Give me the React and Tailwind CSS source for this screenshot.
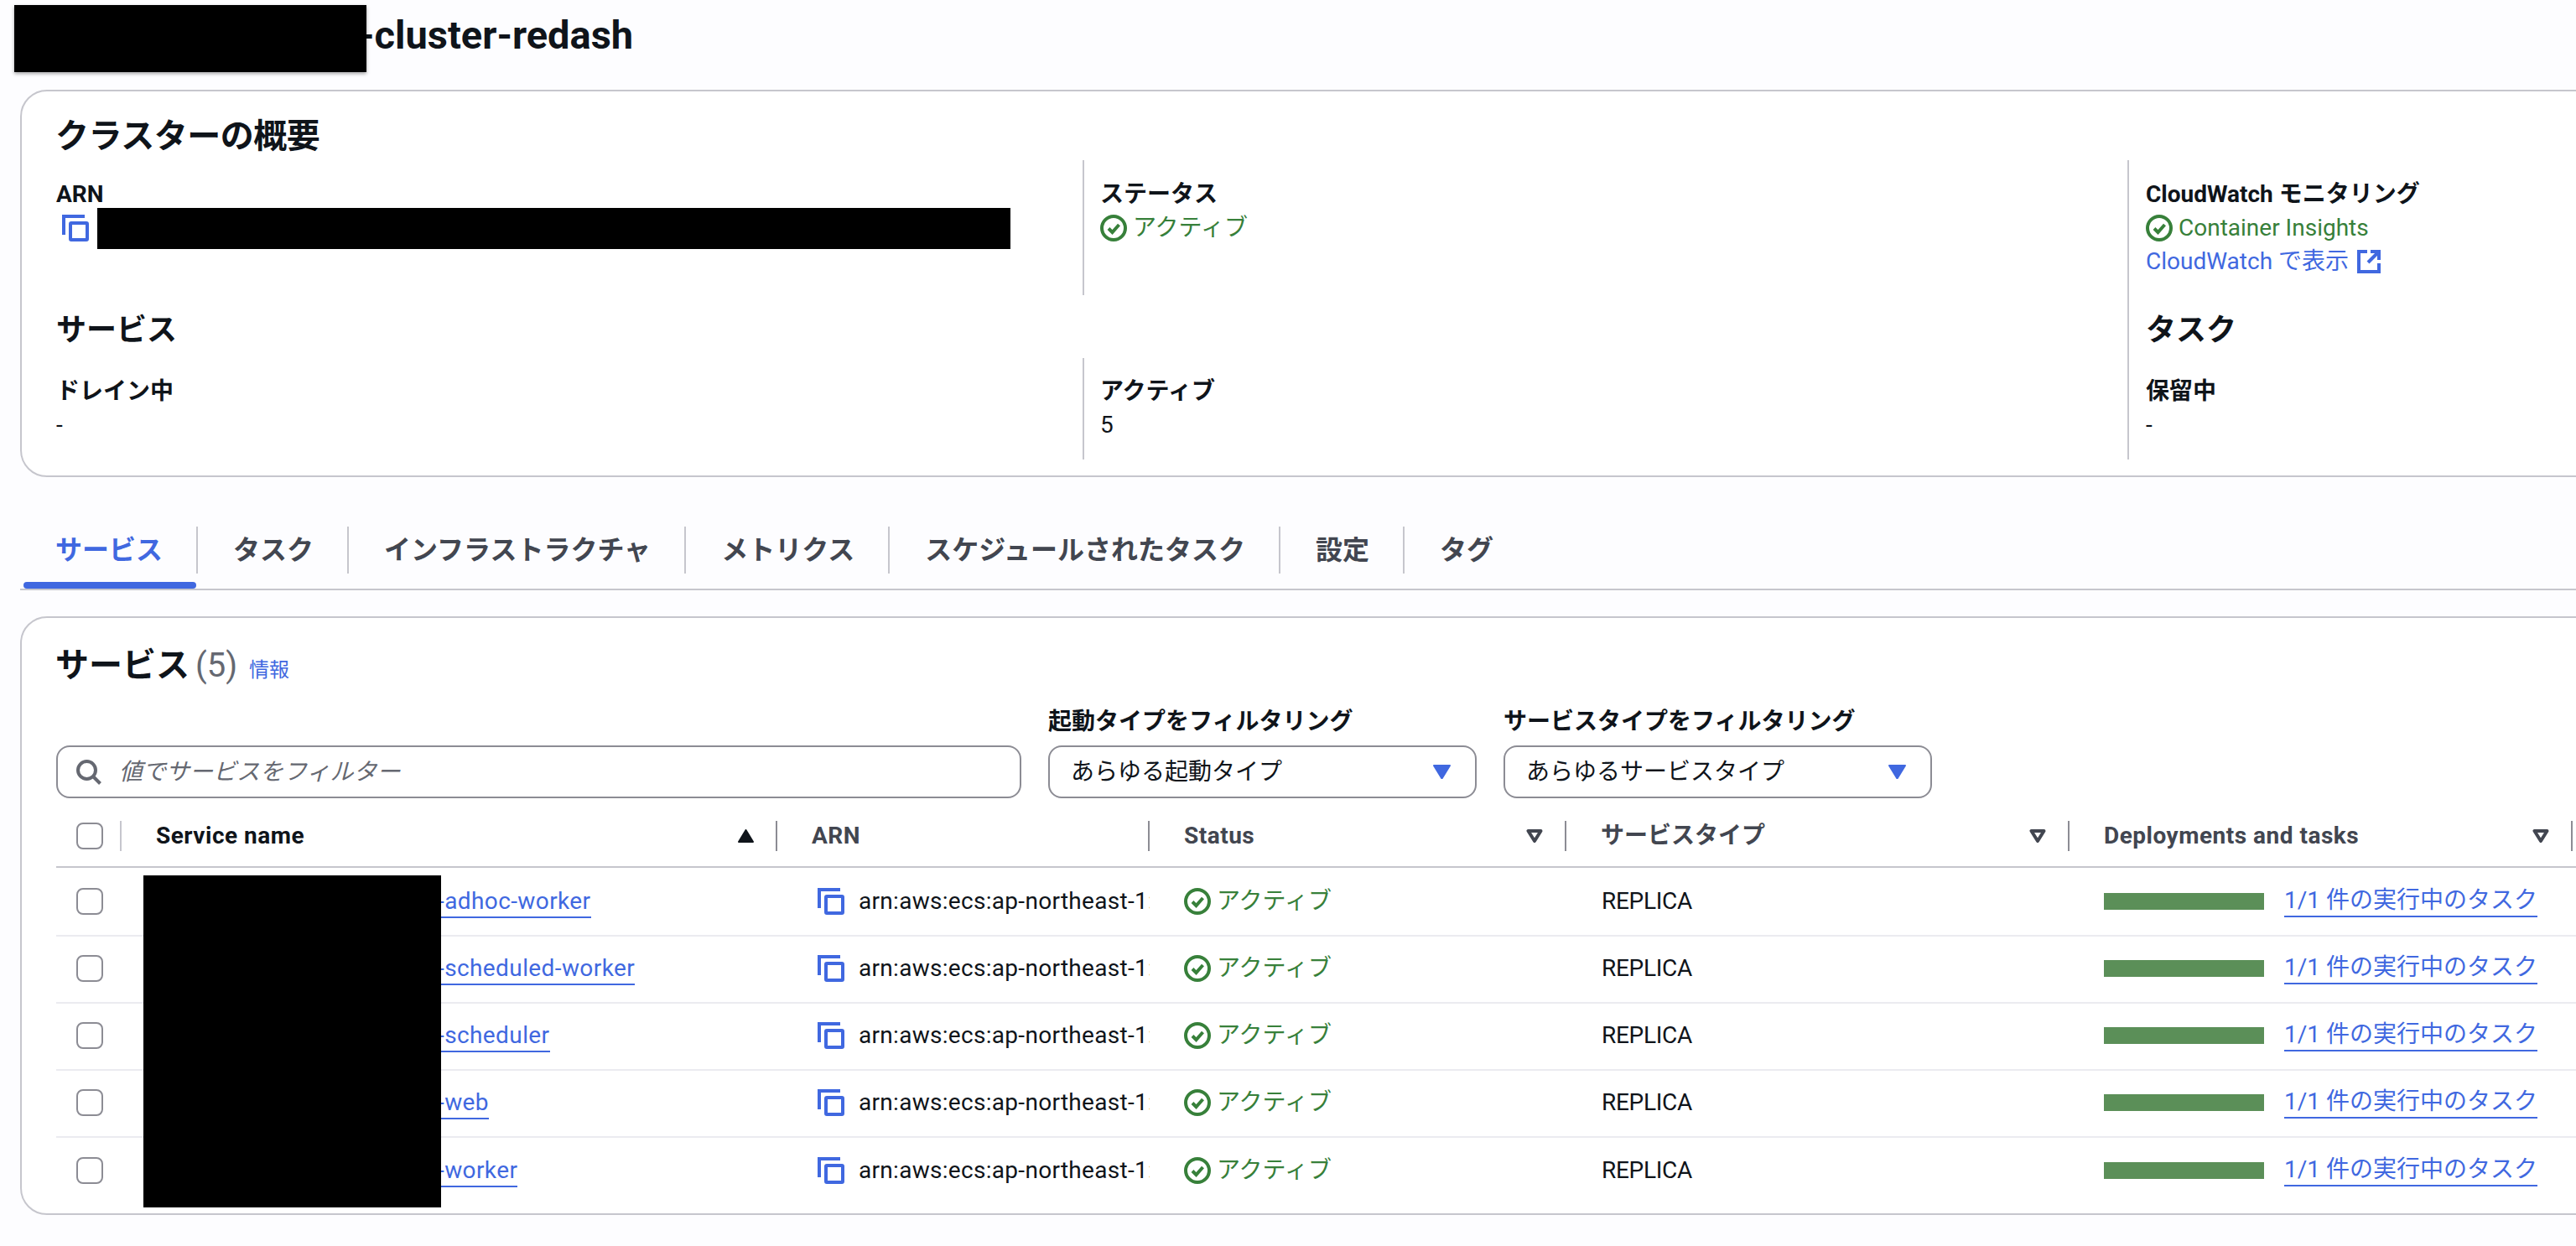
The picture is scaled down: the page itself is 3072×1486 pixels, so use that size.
const BLUE = "text-[#4068e0]";
const GREEN = "text-[#37803a]";

function CopyIcon({ className }) {
  return (
    <svg viewBox="0 0 32 32" className={className} fill="none" stroke="#4068e0" strokeWidth="4">
      <path d="M2 24V2h25" />
      <rect x="10" y="10" width="20" height="20" rx="1" />
    </svg>
  );
}

function CheckIcon() {
  return (
    <svg viewBox="0 0 32 32" className="w-8 h-8 shrink-0" fill="none" stroke="#37803a">
      <circle cx="16" cy="16" r="14" strokeWidth="4" />
      <path d="M10 16.500l4.500 4.500 8-9" strokeWidth="4" />
    </svg>
  );
}

function ExternalIcon() {
  return (
    <svg viewBox="0 0 28 28" className="w-7 h-7 shrink-0" fill="none" stroke="#4068e0" strokeWidth="4">
      <path d="M12 2H2v24h24V16" />
      <path d="M16 2h10v10" />
      <path d="M26 2L13 15" />
    </svg>
  );
}

function FilterIcon() {
  return (
    <svg viewBox="0 0 20 16" className="w-5 h-4 shrink-0" fill="none" stroke="#424650" strokeWidth="4" strokeLinejoin="round">
      <path d="M2.500 2h15L10 14z" />
    </svg>
  );
}

function Caret() {
  return (
    <svg viewBox="0 0 21 17" className="w-[21px] h-[17px] shrink-0">
      <path d="M1 1h19L10.500 16.500z" fill="#4068e0" stroke="#4068e0" strokeWidth="2" strokeLinejoin="round" />
    </svg>
  );
}

function Label({ children }) {
  return <div className="text-[28px] leading-[40px] font-bold text-[#0f141a]">{children}</div>;
}

function Status({ children }) {
  return (
    <div className={`flex items-center gap-[7px] text-[28px] leading-[40px] ${GREEN}`}>
      <CheckIcon />
      <span>{children}</span>
    </div>
  );
}

function Checkbox() {
  return <div className="w-8 h-8 rounded-lg border-2 border-[#8c8c94] bg-white" />;
}

function Head({ children, sort, filter, latin }) {
  return (
    <div className="h-9 flex items-center justify-between border-r-2 border-[#8c8c94] pl-[41px] pr-[26px] text-[28px] font-bold">
      <span className={`${sort ? "text-[#0f141a]" : "text-[#424650]"} ${latin ? "tracking-[0.5px]" : ""}`}>{children}</span>
      {sort && (
        <svg viewBox="0 0 19 16" className="w-[19px] h-4">
          <path d="M9.500 1L18 15H1z" fill="#0f141a" stroke="#0f141a" strokeWidth="2" strokeLinejoin="round" />
        </svg>
      )}
      {filter && <FilterIcon />}
    </div>
  );
}

const rows = ["-adhoc-worker", "-scheduled-worker", "-scheduler", "-web", "-worker"];
const gridCols = "grid grid-cols-[78px_782px_444px_497px_600px_600px_1fr]";
const tabs = ["サービス", "タスク", "インフラストラクチャ", "メトリクス", "スケジュールされたタスク", "設定", "タグ"];

export default function App() {
  return (
    <div
      className="w-[3072px] h-[1486px] overflow-hidden bg-[#fdfdff] text-[#0f141a] text-[28px]"
      style={{ fontFamily: 'Roboto, "Noto Sans CJK JP", sans-serif' }}
    >
      <div className="relative h-[107px] pl-[428px] pt-[7px]">
        <h1 className="text-[47px] leading-[70px] font-bold">-cluster-redash</h1>
        <div className="absolute left-[17px] top-[6px] w-[420px] h-[80px] bg-black shadow-[0_2px_4px_rgba(0,0,0,0.35)]" />
      </div>

      <section className="ml-[24px] w-[3100px] h-[462px] rounded-[32px] border-2 border-[#c6c6cd] bg-white pl-[41px] pt-[28px]">
        <h2 className="text-[40px] leading-[52px] font-bold -ml-[1px] tracking-[-0.5px]">クラスターの概要</h2>
        <div className="grid grid-cols-[1224px_1246px_1fr] mt-[2px]">
          <div className="h-[161px] pt-[21px] relative">
            <Label>ARN</Label>
            <CopyIcon className="w-8 h-8 ml-[7px] mt-[4px]" />
            <div className="absolute left-[49px] top-[57px] w-[1089px] h-[49px] bg-black" />
          </div>
          <div className="h-[161px] border-l-2 border-[#c6c6cd] pl-[19px] pt-[21px]">
            <Label>ステータス</Label>
            <Status>アクティブ</Status>
          </div>
          <div className="h-[161px] border-l-2 border-[#c6c6cd] pl-[20px] pt-[21px]">
            <Label>CloudWatch モニタリング</Label>
            <Status>Container Insights</Status>
            <div className={`flex items-center gap-[10px] text-[28px] leading-[40px] ${BLUE}`}>
              <span>CloudWatch で表示</span>
              <ExternalIcon />
            </div>
          </div>

          <div className="h-[75px] pt-[18px]">
            <h3 className="text-[36px] leading-[48px] font-bold">サービス</h3>
          </div>
          <div className="h-[75px]" />
          <div className="h-[75px] pt-[18px] border-l-2 border-[#c6c6cd] pl-[20px]">
            <h3 className="text-[36px] leading-[48px] font-bold">タスク</h3>
          </div>

          <div className="h-[121px] pt-[20px]">
            <Label>ドレイン中</Label>
            <div className="leading-[40px]">-</div>
          </div>
          <div className="h-[121px] pt-[20px] border-l-2 border-[#c6c6cd] pl-[19px]">
            <Label>アクティブ</Label>
            <div className="leading-[40px]">5</div>
          </div>
          <div className="h-[121px] pt-[20px] border-l-2 border-[#c6c6cd] pl-[20px]">
            <Label>保留中</Label>
            <div className="leading-[40px]">-</div>
          </div>
        </div>
      </section>

      <nav className="ml-[24px] mt-[31px] h-[104px] flex items-start border-b-2 border-[#c6c6cd] pt-[28px]">
        {tabs.map((t, i) => (
          <div key={t} className="relative h-[74px]">
            <div
              className={`h-[56px] flex items-center pl-[42px] pr-[40px] text-[32px] font-bold ${
                i === 0 ? BLUE : "text-[#424650]"
              } ${i < tabs.length - 1 ? "border-r-2 border-[#c6c6cd]" : ""}`}
            >
              {t}
            </div>
            {i === 0 && <div className="absolute left-[4px] right-[2px] bottom-0 h-2 rounded bg-[#4068e0]" />}
          </div>
        ))}
      </nav>

      <section className="ml-[24px] mt-[31px] w-[3100px] h-[714px] rounded-[32px] border-2 border-[#c6c6cd] bg-white pl-[41px] pt-[27px]">
        <div className="flex items-baseline h-[58px]">
          <h2 className="text-[40px] leading-[58px] font-bold -ml-[1px]">サービス</h2>
          <span className="text-[40px] text-[#656871] ml-[7px]">(5)</span>
          <span className={`text-[24px] ml-[14px] ${BLUE}`}>情報</span>
        </div>

        <div className="flex items-end gap-[32px] mt-[19px]">
          <div className="w-[1151px] h-[63px] rounded-[16px] border-2 border-[#8c8c94] flex items-center pl-[22px] gap-[21px]">
            <svg viewBox="0 0 30 30" className="w-[30px] h-[30px] shrink-0" fill="none" stroke="#656871" strokeWidth="4">
              <circle cx="12.500" cy="12.500" r="10.500" />
              <path d="M20 20l8.500 8.500" />
            </svg>
            <span className="italic text-[#656871]">値でサービスをフィルター</span>
          </div>
          {["起動タイプをフィルタリング:あらゆる起動タイプ", "サービスタイプをフィルタリング:あらゆるサービスタイプ"].map((s) => {
            const [label, value] = s.split(":");
            return (
              <div key={label} className="w-[511px]">
                <div className="text-[28px] leading-[40px] font-bold mb-[8px]">{label}</div>
                <div className="h-[63px] rounded-[16px] border-2 border-[#8c8c94] flex items-center justify-between pl-[25px] pr-[29px]">
                  <span>{value}</span>
                  <Caret />
                </div>
              </div>
            );
          })}
        </div>

        <div className="relative mt-[8px]">
          <div className={`${gridCols} h-[75px] items-center border-b-2 border-[#c6c6cd]`}>
            <div className="h-9 flex items-center border-r-2 border-[#c6c6cd] pl-[24px]">
              <Checkbox />
            </div>
            <Head sort latin>Service name</Head>
            <Head latin>ARN</Head>
            <Head filter latin>Status</Head>
            <Head filter>サービスタイプ</Head>
            <Head filter latin>Deployments and tasks</Head>
          </div>

          {rows.map((r, i) => (
            <div
              key={r}
              className={`${gridCols} items-center ${i === 0 ? "h-[82px]" : "h-[80px] pb-[3px]"} ${
                i < rows.length - 1 ? "border-b-2 border-[#ebebf0]" : ""
              }`}
            >
              <div className="pl-[24px]">
                <Checkbox />
              </div>
              <div className="pl-[377px]">
                <a className={`inline-block leading-[36px] border-b-2 border-[#4068e0] tracking-[0.4px] ${BLUE}`}>{r}</a>
              </div>
              <div className="flex items-center pl-[48px] gap-[17px] overflow-hidden whitespace-nowrap">
                <CopyIcon className="w-8 h-8 shrink-0" />
                <span className="tracking-[0.3px]">arn:aws:ecs:ap-northeast-1:</span>
              </div>
              <div className="pl-[41px]">
                <Status>アクティブ</Status>
              </div>
              <div className="pl-[42px] tracking-[-0.3px]">REPLICA</div>
              <div className="pl-[41px] flex items-center gap-[24px] whitespace-nowrap">
                <div className="w-[191px] h-5 bg-[#5b8f58] shrink-0" />
                <a className={`inline-block leading-[36px] border-b-2 border-[#4068e0] ${BLUE}`}>1/1 件の実行中のタスク</a>
              </div>
            </div>
          ))}

          <div className="absolute left-[104px] top-[84px] w-[355px] h-[396px] bg-black" />
        </div>
      </section>
    </div>
  );
}
